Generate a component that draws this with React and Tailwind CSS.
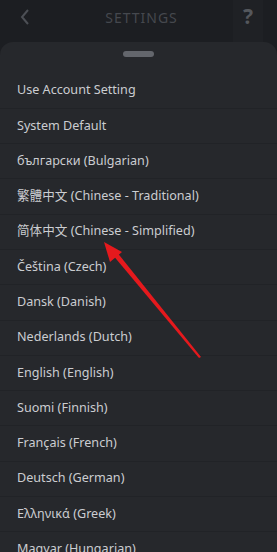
import React from 'react';

const languages = [
    'Use Account Setting',
    'System Default',
    'български (Bulgarian)',
    '繁體中文 (Chinese - Traditional)',
    '简体中文 (Chinese - Simplified)',
    'Čeština (Czech)',
    'Dansk (Danish)',
    'Nederlands (Dutch)',
    'English (English)',
    'Suomi (Finnish)',
    'Français (French)',
    'Deutsch (German)',
    'Ελληνικά (Greek)',
    'Magyar (Hungarian)',
];

const App = () => {
    return (
    <div className="relative w-[277px] h-[552px] overflow-hidden bg-[#1c1e22] font-['Noto_Sans','Noto_Sans_CJK_SC',sans-serif]">
        {/* header */}
        <div className="flex items-center h-[42px] pl-[20px] pr-[14px]">
            <div className="w-[30px] flex">
                <svg width="10" height="16" viewBox="0 0 10 16" className="mt-[-8px]">
                    <path d="M8 1 L2 8 L8 15" fill="none" stroke="#4c4f55" strokeWidth="2" />
                </svg>
            </div>
            <div className="flex-1 text-center text-[14px] tracking-[1px] text-[#45484e] mt-[-8px]">SETTINGS</div>
            <div className="w-[30px] h-[42px] flex items-center justify-center bg-[#1f2125]">
                <span className="text-[21px] font-bold text-[#54575c] mt-[-8px]">?</span>
            </div>
        </div>

        {/* sheet */}
        <div className="bg-[#26282c] rounded-t-[13px] h-full">
            <div className="flex justify-center pt-[9px]">
                <div className="w-[31px] h-[6px] rounded-full bg-[#63666c]"></div>
            </div>
            <div className="mt-[16.5px]">
                {languages.map((lang) => (
                    <div key={lang} className="h-[35.3px] flex items-center px-[17px] border-b border-[#212327] text-[12.6px] text-[#cbcdd1]">
                        {lang}
                    </div>
                ))}
            </div>
        </div>

        {/* annotation arrow */}
        <svg className="absolute left-0 top-0 pointer-events-none" width="277" height="552">
            <polygon points="199,358 201,357 116,251 112,254" fill="#e5191d" />
            <polygon points="104,242 122,252 110,262" fill="#e5191d" />
        </svg>
    </div>
    );
};

export default App;
